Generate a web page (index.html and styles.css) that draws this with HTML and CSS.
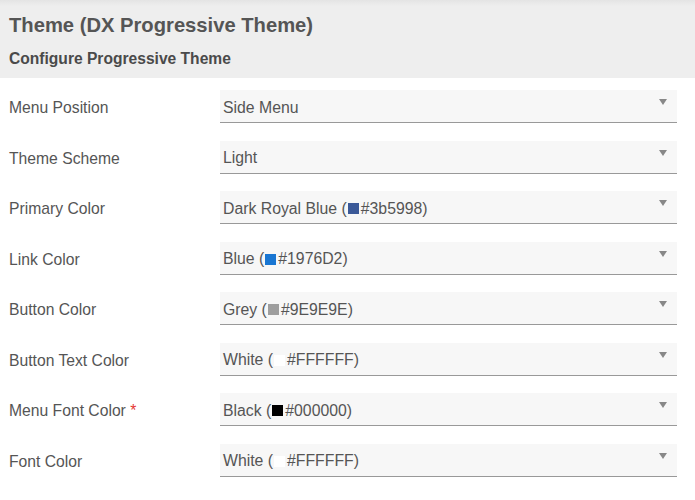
FILE: index.html
```html
<!DOCTYPE html>
<html lang="en">
<head>
    <meta charset="UTF-8">
    <title>Theme (DX Progressive Theme)</title>
    <link rel="stylesheet" href="styles.css">
</head>
<body>
    <div class="theme-header">
        <h2 class="theme-title">Theme (DX Progressive Theme)</h2>
        <h4 class="theme-subtitle">Configure Progressive Theme</h4>
    </div>

    <div class="settings-form">
        <div class="form-row">
            <label class="field-label">Menu Position</label>
            <div class="select-box"><span class="select-value">Side Menu</span><span class="select-arrow"></span></div>
        </div>
        <div class="form-row">
            <label class="field-label">Theme Scheme</label>
            <div class="select-box"><span class="select-value">Light</span><span class="select-arrow"></span></div>
        </div>
        <div class="form-row">
            <label class="field-label">Primary Color</label>
            <div class="select-box"><span class="select-value">Dark Royal Blue (<i class="swatch" style="background:#3b5998"></i>#3b5998)</span><span class="select-arrow"></span></div>
        </div>
        <div class="form-row">
            <label class="field-label">Link Color</label>
            <div class="select-box"><span class="select-value">Blue (<i class="swatch" style="background:#1976D2"></i>#1976D2)</span><span class="select-arrow"></span></div>
        </div>
        <div class="form-row">
            <label class="field-label">Button Color</label>
            <div class="select-box"><span class="select-value">Grey (<i class="swatch" style="background:#9E9E9E"></i>#9E9E9E)</span><span class="select-arrow"></span></div>
        </div>
        <div class="form-row">
            <label class="field-label">Button Text Color</label>
            <div class="select-box"><span class="select-value">White (<i class="swatch" style="background:#FFFFFF"></i>#FFFFFF)</span><span class="select-arrow"></span></div>
        </div>
        <div class="form-row">
            <label class="field-label">Menu Font Color <span class="required">*</span></label>
            <div class="select-box"><span class="select-value">Black (<i class="swatch" style="background:#000000"></i>#000000)</span><span class="select-arrow"></span></div>
        </div>
        <div class="form-row">
            <label class="field-label">Font Color</label>
            <div class="select-box"><span class="select-value">White (<i class="swatch" style="background:#FFFFFF"></i>#FFFFFF)</span><span class="select-arrow"></span></div>
        </div>
    </div>
</body>
</html>
```

FILE: styles.css
```css
body {
    margin: 0;
    background: #fff;
    font-family: "Liberation Sans", Arial, sans-serif;
    color: #555;
}

.theme-header {
    height: 78px;
    padding: 0 9px;
    box-sizing: border-box;
    background: linear-gradient(to bottom, #e4e4e4 0, #eeeeee 6px, #eeeeee 100%);
    overflow: hidden;
}

.theme-title {
    margin: 0;
    padding-top: 13px;
    font-size: 20.2px;
    line-height: 24px;
    font-weight: bold;
    color: #555;
}

.theme-subtitle {
    margin: 0;
    padding-top: 13px;
    font-size: 15.6px;
    line-height: 18px;
    font-weight: bold;
    color: #4a4a4a;
}

.settings-form {
    display: flex;
    flex-direction: column;
    gap: 17.57px;
    padding: 12px 18px 0 9px;
}

.form-row {
    display: flex;
    align-items: center;
}

.field-label {
    width: 211px;
    flex-shrink: 0;
    font-size: 15.7px;
    color: #555;
    padding-top: 3px;
}

.required {
    color: #e53935;
}

.select-box {
    flex: 1;
    height: 32px;
    display: flex;
    align-items: center;
    justify-content: space-between;
    padding: 0 10px 0 3px;
    background: #f7f7f7;
    border-bottom: 1px solid #999;
    font-size: 15.8px;
    color: #555;
}

.select-value {
    display: flex;
    align-items: center;
    padding-top: 3px;
}

.swatch {
    display: inline-block;
    width: 11px;
    height: 11px;
    margin: 0 2px 0 1px;
}

.select-arrow {
    width: 0;
    height: 0;
    margin-bottom: 8px;
    border-left: 4px solid transparent;
    border-right: 4px solid transparent;
    border-top: 6px solid #888;
}
```
